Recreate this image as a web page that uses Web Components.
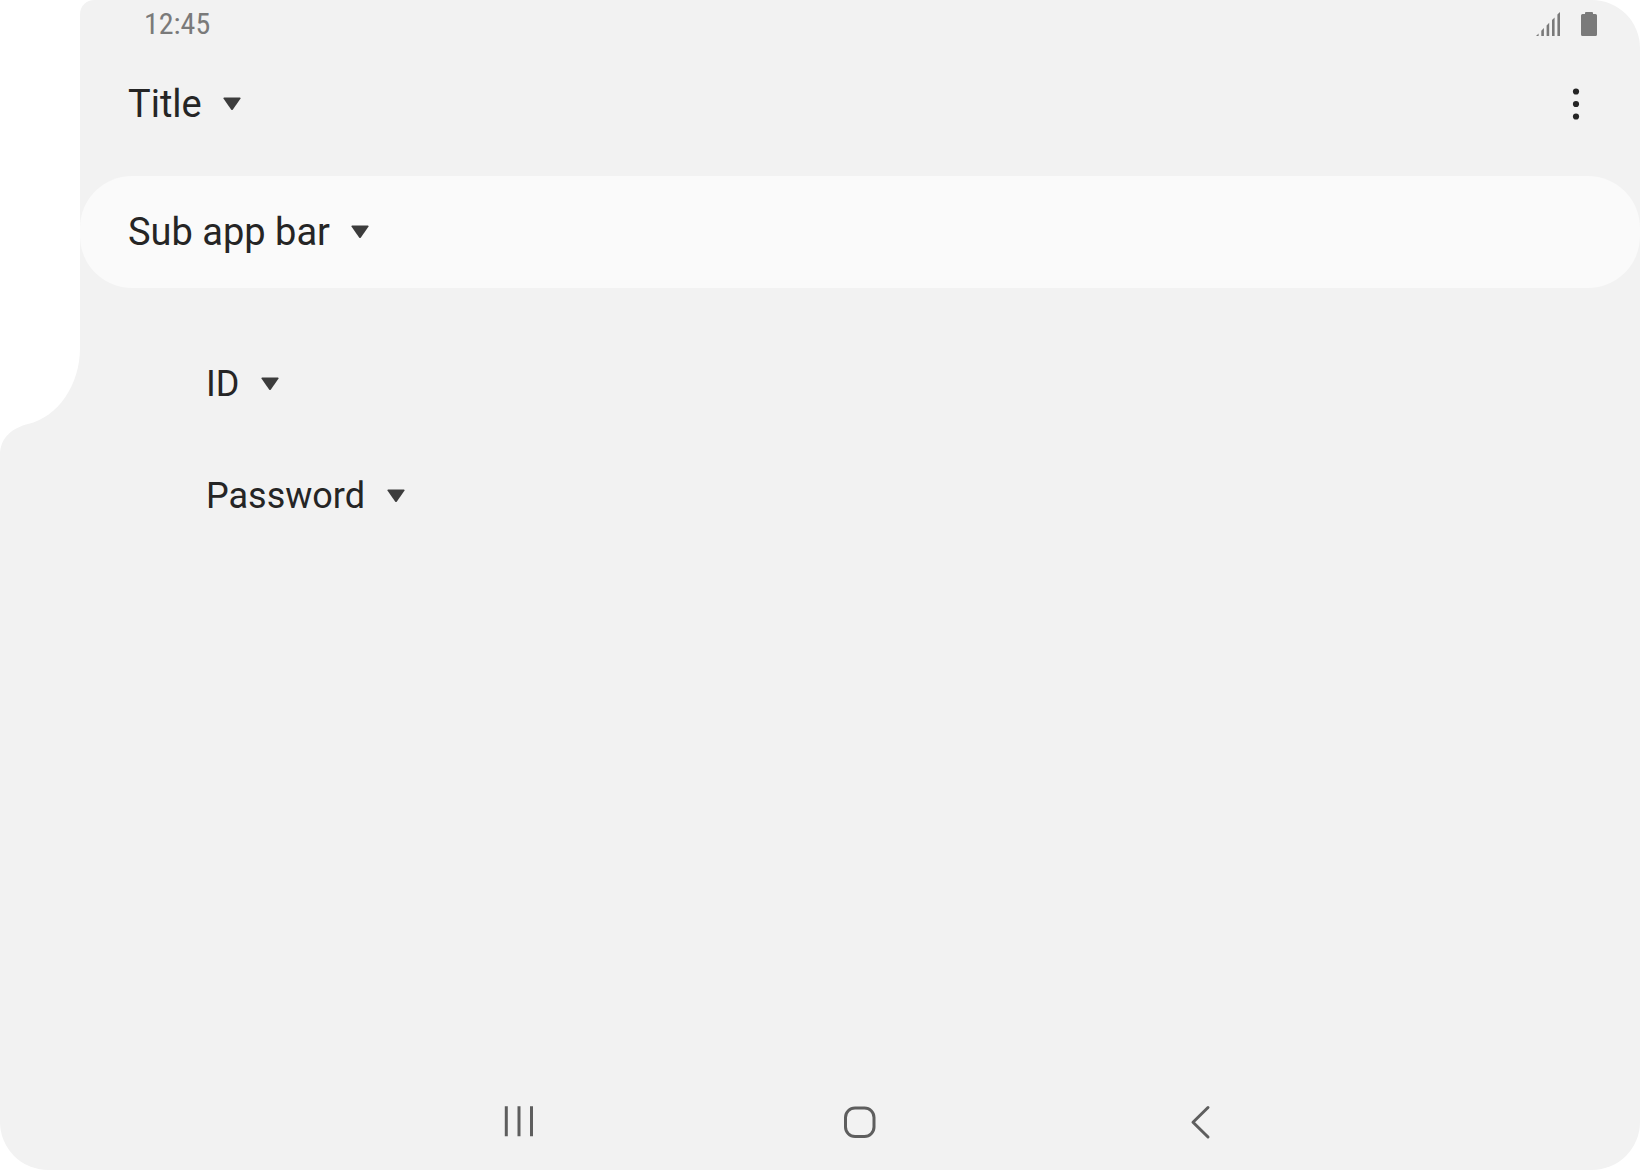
<!DOCTYPE html>
<html lang="en">
<head>
<meta charset="utf-8">
<meta name="viewport" content="width=device-width, initial-scale=1">
<title>Title</title>
<style>
  html, body { height: 100%; margin: 0; background: #fff; }
  body { font-family: Roboto, "Liberation Sans", sans-serif; color: #252525; }
</style>
</head>
<body>
<device-screen>
  <status-bar slot="status" time="12:45"></status-bar>
  <app-bar>
    <menu-trigger>Title</menu-trigger>
    <more-button slot="action"></more-button>
  </app-bar>
  <sub-app-bar><menu-trigger>Sub app bar</menu-trigger></sub-app-bar>
  <field-list>
    <menu-trigger size="list">ID</menu-trigger>
    <menu-trigger size="list">Password</menu-trigger>
  </field-list>
  <nav-bar slot="nav"></nav-bar>
</device-screen>

<script>
  const define = (name, html) => {
    const template = document.createElement('template');
    template.innerHTML = html;
    customElements.define(name, class extends HTMLElement {
      constructor() {
        super();
        this.attachShadow({ mode: 'open' }).append(template.content.cloneNode(true));
      }
      connectedCallback() {
        const time = this.shadowRoot.querySelector('time');
        if (time) time.textContent = this.getAttribute('time');
      }
    });
  };

  define('device-screen', `
    <style>
      :host { display: flex; min-height: 100vh; box-sizing: border-box; position: relative;
        background: #f2f2f2; border-radius: 0 48px 48px 48px; overflow: hidden; padding-left: 80px; }
      .cutout { position: absolute; left: 0; top: 0; }
      .column { flex: 1; min-width: 0; display: flex; flex-direction: column; }
      main { flex: 1; }
    </style>
    <svg class="cutout" width="96" height="456" viewBox="0 0 96 456" aria-hidden="true">
      <path fill="#fff" d="M0 0H95C86 0 80 6 80 15V348C80 385 58 417 28 424C12 428 0 438 0 455Z"/>
    </svg>
    <div class="column">
      <slot name="status"></slot>
      <main><slot></slot></main>
      <slot name="nav"></slot>
    </div>`);

  define('status-bar', `
    <style>
      :host { display: flex; align-items: center; justify-content: space-between;
        height: 48px; padding: 0 43px 0 64px; color: #7a7a7a; }
      time { font: 30px/48px "Roboto Condensed", Roboto, sans-serif; }
      .icons { display: flex; gap: 21px; }
      svg { display: block; }
    </style>
    <time></time>
    <div class="icons">
      <svg width="24" height="24" viewBox="0 0 24 24" fill="currentColor" role="img" aria-label="Signal">
        <path d="M0 24L2.600 21.400V24ZM5.300 24V18.700L7.900 16.100V24ZM10.600 24V13.400L13.200 10.800V24ZM16 24V8L18.600 5.400V24ZM21.400 24V2.600L24 0V24Z"/>
      </svg>
      <svg width="16" height="24" viewBox="0 0 16 24" fill="currentColor" role="img" aria-label="Battery">
        <path d="M5 0H11Q12 0 12 1V2H14.500Q16 2 16 3.500V22.500Q16 24 14.500 24H1.500Q0 24 0 22.500V3.500Q0 2 1.500 2H4V1Q4 0 5 0Z"/>
      </svg>
    </div>`);

  define('app-bar', `
    <style>
      :host { display: flex; align-items: center; justify-content: space-between;
        height: 112px; padding: 0 40px 0 48px; }
    </style>
    <slot></slot><slot name="action"></slot>`);

  define('sub-app-bar', `
    <style>
      :host { display: flex; align-items: center; height: 112px; margin-top: 16px;
        padding: 0 48px; background: #fafafa; border-radius: 52px; }
    </style>
    <slot></slot>`);

  define('field-list', `
    <style>
      :host { display: flex; flex-direction: column; align-items: flex-start; padding: 40px 126px; }
    </style>
    <slot></slot>`);

  define('menu-trigger', `
    <style>
      :host { display: flex; height: 112px; font-size: 38px; }
      :host([size="list"]) { font-size: 36px; }
      button { display: flex; align-items: center; gap: 22px; padding: 0; border: 0;
        background: none; color: inherit; font: inherit; line-height: 48px; cursor: pointer; }
      :host(:not([size])) button { gap: 21px; }
      svg { display: block; fill: #3c3c3c; }
    </style>
    <button type="button" aria-haspopup="menu"><span><slot></slot></span>
      <svg width="18" height="14" viewBox="0 0 18 14" aria-hidden="true">
        <path d="M1.200 0.500H16.800Q18.200 0.500 17.400 1.700L9.900 12.500Q9 13.700 8.100 12.500L0.600 1.700Q-0.200 0.500 1.200 0.500Z"/>
      </svg>
    </button>`);

  define('more-button', `
    <style>
      :host { display: block; }
      button { display: block; padding: 0; border: 0; background: none; color: inherit; cursor: pointer; }
      svg { display: block; }
    </style>
    <button type="button" aria-label="More options">
      <svg width="48" height="48" viewBox="0 0 48 48" fill="currentColor">
        <circle cx="24" cy="11.500" r="3.100"/><circle cx="24" cy="24" r="3.100"/><circle cx="24" cy="36.500" r="3.100"/>
      </svg>
    </button>`);

  define('nav-bar', `
    <style>
      :host { display: block; }
      nav { display: grid; grid-template-columns: repeat(3, minmax(0, 341px)); justify-content: center; height: 96px; }
      button { display: flex; align-items: center; justify-content: center; padding: 0; border: 0;
        background: none; color: #5e5e5e; cursor: pointer; }
      svg { fill: none; stroke: currentColor; stroke-width: 3; stroke-linecap: round; stroke-linejoin: round; }
    </style>
    <nav>
      <button type="button" aria-label="Recents">
        <svg width="48" height="48" viewBox="0 0 48 48"><path stroke-linecap="butt" d="M11.300 8.300V38.300M24 8.300V38.300M36.500 8.300V38.300"/></svg>
      </button>
      <button type="button" aria-label="Home">
        <svg width="48" height="48" viewBox="0 0 48 48"><rect x="9.500" y="10" width="28.500" height="28.500" rx="9.500"/></svg>
      </button>
      <button type="button" aria-label="Back">
        <svg width="48" height="48" viewBox="0 0 48 48"><path d="M31 9.500L16 24.200L31 39"/></svg>
      </button>
    </nav>`);
</script>
</body>
</html>
